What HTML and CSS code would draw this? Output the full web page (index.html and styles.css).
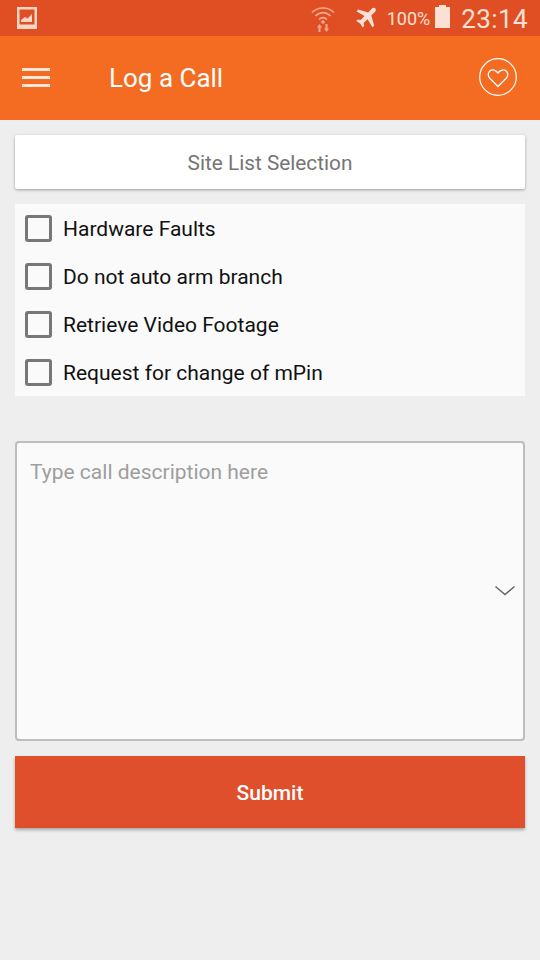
FILE: index.html
```html
<!DOCTYPE html>
<html lang="en">
<head>
<meta charset="utf-8">
<title>Log a Call</title>
<link rel="stylesheet" href="styles.css">
</head>
<body>
<div class="statusbar">
  <svg class="st-image" width="20" height="22" viewBox="0 0 20 22"><path fill="#f9d5c5" fill-rule="evenodd" d="M0 0h20v22H0zM2.500 2.500v15h15v-15z"/><path fill="#f9d5c5" d="M4 15v-2l4-3 2.500 1.500L15 7v8z"/></svg>
  <div class="st-right">
    <svg class="st-wifi" width="26" height="30" viewBox="0 0 26 30"><g fill="none" stroke="#f5a98c" stroke-width="1.7"><path d="M2 9.500C8 3.500 18 3.500 24 9.500"/><path d="M5.500 13C10 8.500 16 8.500 20.500 13"/><path d="M9 16.500C11.500 14 14.500 14 17 16.500"/></g><circle cx="13" cy="19" r="1.800" fill="#f5a98c"/><path fill="#f5a98c" d="M9.500 21l2.500 3.500h-1.500V29h-2v-4.500H7zM16.500 29l-2.500-3.500h1.500V21h2v4.500H19z"/></svg>
    <svg class="st-plane" width="24" height="24" viewBox="0 0 24 24"><path fill="#fbe0d5" d="M21.500 2.500c-1-1-2.700-.8-3.800.3l-3.500 3.600L4.300 3.500 2.500 5.300l8 4.800-3.800 4-3-.6-1.500 1.500 4 2.500 2.500 4 1.500-1.500-.6-3 4-3.800 4.800 8 1.800-1.800-2.900-9.900 3.600-3.500c1.100-1.100 1.300-2.800.3-3.800z"/></svg>
    <span class="st-pct">100%</span>
    <span class="st-batt"><span class="st-cap"></span><span class="st-body"></span></span>
    <span class="st-time">23:14</span>
  </div>
</div>
<header class="appbar">
  <div class="menu"><span></span><span></span><span></span></div>
  <h1 class="title">Log a Call</h1>
  <svg class="fav" width="40" height="40" viewBox="0 0 40 40"><circle cx="20" cy="20" r="18.300" fill="none" stroke="#fff" stroke-width="1.200"/><path fill="none" stroke="#fff" stroke-width="1.300" stroke-linejoin="round" d="M20 29.500l-8-8c-2.300-2.400-2.300-5.800-.2-7.500 2.300-1.800 5.800-1.300 8.200 2 2.400-3.300 5.900-3.800 8.200-2 2.100 1.700 2.100 5.100-.2 7.500z"/></svg>
</header>
<main class="content">
  <button class="site">Site List Selection</button>
  <section class="checks">
    <label class="check"><span class="box"></span><span class="label">Hardware Faults</span></label>
    <label class="check"><span class="box"></span><span class="label">Do not auto arm branch</span></label>
    <label class="check"><span class="box"></span><span class="label">Retrieve Video Footage</span></label>
    <label class="check"><span class="box"></span><span class="label">Request for change of mPin</span></label>
  </section>
  <div class="desc">
    <span class="placeholder">Type call description here</span>
    <svg class="chev" width="22" height="12" viewBox="0 0 22 12"><path fill="none" stroke="#666" stroke-width="1.400" d="M1.500 1.500L11 9.500l9.500-8"/></svg>
  </div>
  <button class="submit">Submit</button>
</main>
</body>
</html>
```
FILE: styles.css
```css
* { box-sizing: border-box; }
html, body { margin: 0; padding: 0; }
body {
  width: 540px;
  height: 960px;
  background: #eeeeee;
  font-family: Roboto, "Liberation Sans", sans-serif;
  overflow: hidden;
}
.statusbar {
  height: 36px;
  background: #e04f23;
  display: flex;
  align-items: center;
  justify-content: space-between;
  padding: 0 12px 0 17px;
}
.st-image { display: block; }
.st-right { display: flex; align-items: center; }
.st-wifi { margin-right: 18px; margin-left: 1px; }
.st-plane { margin-right: 9px; }
.st-pct { color: #fbe0d5; font-size: 18px; margin-right: 5px; }
.st-batt { display: flex; flex-direction: column; align-items: center; width: 15px; margin-right: 11px; margin-bottom: 4px; }
.st-cap { width: 7px; height: 2px; background: #fbe0d5; }
.st-body { width: 15px; height: 21px; background: #fbe0d5; }
.st-time { color: #fbe0d5; font-size: 26px; letter-spacing: .4px; margin-top: 2px; }
.appbar {
  height: 84px;
  background: #f46b22;
  display: flex;
  align-items: center;
  padding: 0 22px 0 22px;
}
.menu { width: 28px; display: flex; flex-direction: column; gap: 5px; margin-bottom: 2px; }
.menu span { height: 3px; background: #fde6d9; }
.title {
  margin: 0 0 0 59px;
  flex: 1;
  color: #fff;
  font-size: 26px;
  font-weight: 400;
}
.fav { display: block; margin-bottom: 2px; }
.content { padding: 15px 15px 0; display: flex; flex-direction: column; }
button { font-family: inherit; border: 0; display: block; width: 100%; }
.site {
  height: 54px;
  background: #fff;
  color: #757575;
  font-size: 20.800px;
  padding-top: 2px;
  border-radius: 2px;
  box-shadow: 0 1px 3px rgba(0,0,0,.35);
}
.checks {
  margin-top: 15px;
  height: 192px;
  background: #fafafa;
  display: flex;
  flex-direction: column;
}
.check {
  height: 48px;
  display: flex;
  align-items: center;
  font-size: 21px;
  color: #111;
  padding-left: 10px;
}
.label { margin-top: 2px; }
.box {
  width: 27px;
  height: 27px;
  border: 3px solid #777;
  border-radius: 3px;
  margin-right: 11px;
  flex: none;
}
.desc {
  margin-top: 45px;
  height: 300px;
  background: #fafafa;
  border: 2px solid #bdbdbd;
  border-radius: 4px;
  padding: 17px 13px;
  position: relative;
}
.placeholder { color: #9e9e9e; font-size: 21px; display: block; }
.chev { position: absolute; right: 7px; top: 142px; }
.submit {
  margin-top: 15px;
  height: 72px;
  background: #e04f2b;
  color: #fff;
  font-size: 21px;
  font-weight: 500;
  padding-top: 2px;
  box-shadow: 0 2px 3px rgba(0,0,0,.3);
}
```
